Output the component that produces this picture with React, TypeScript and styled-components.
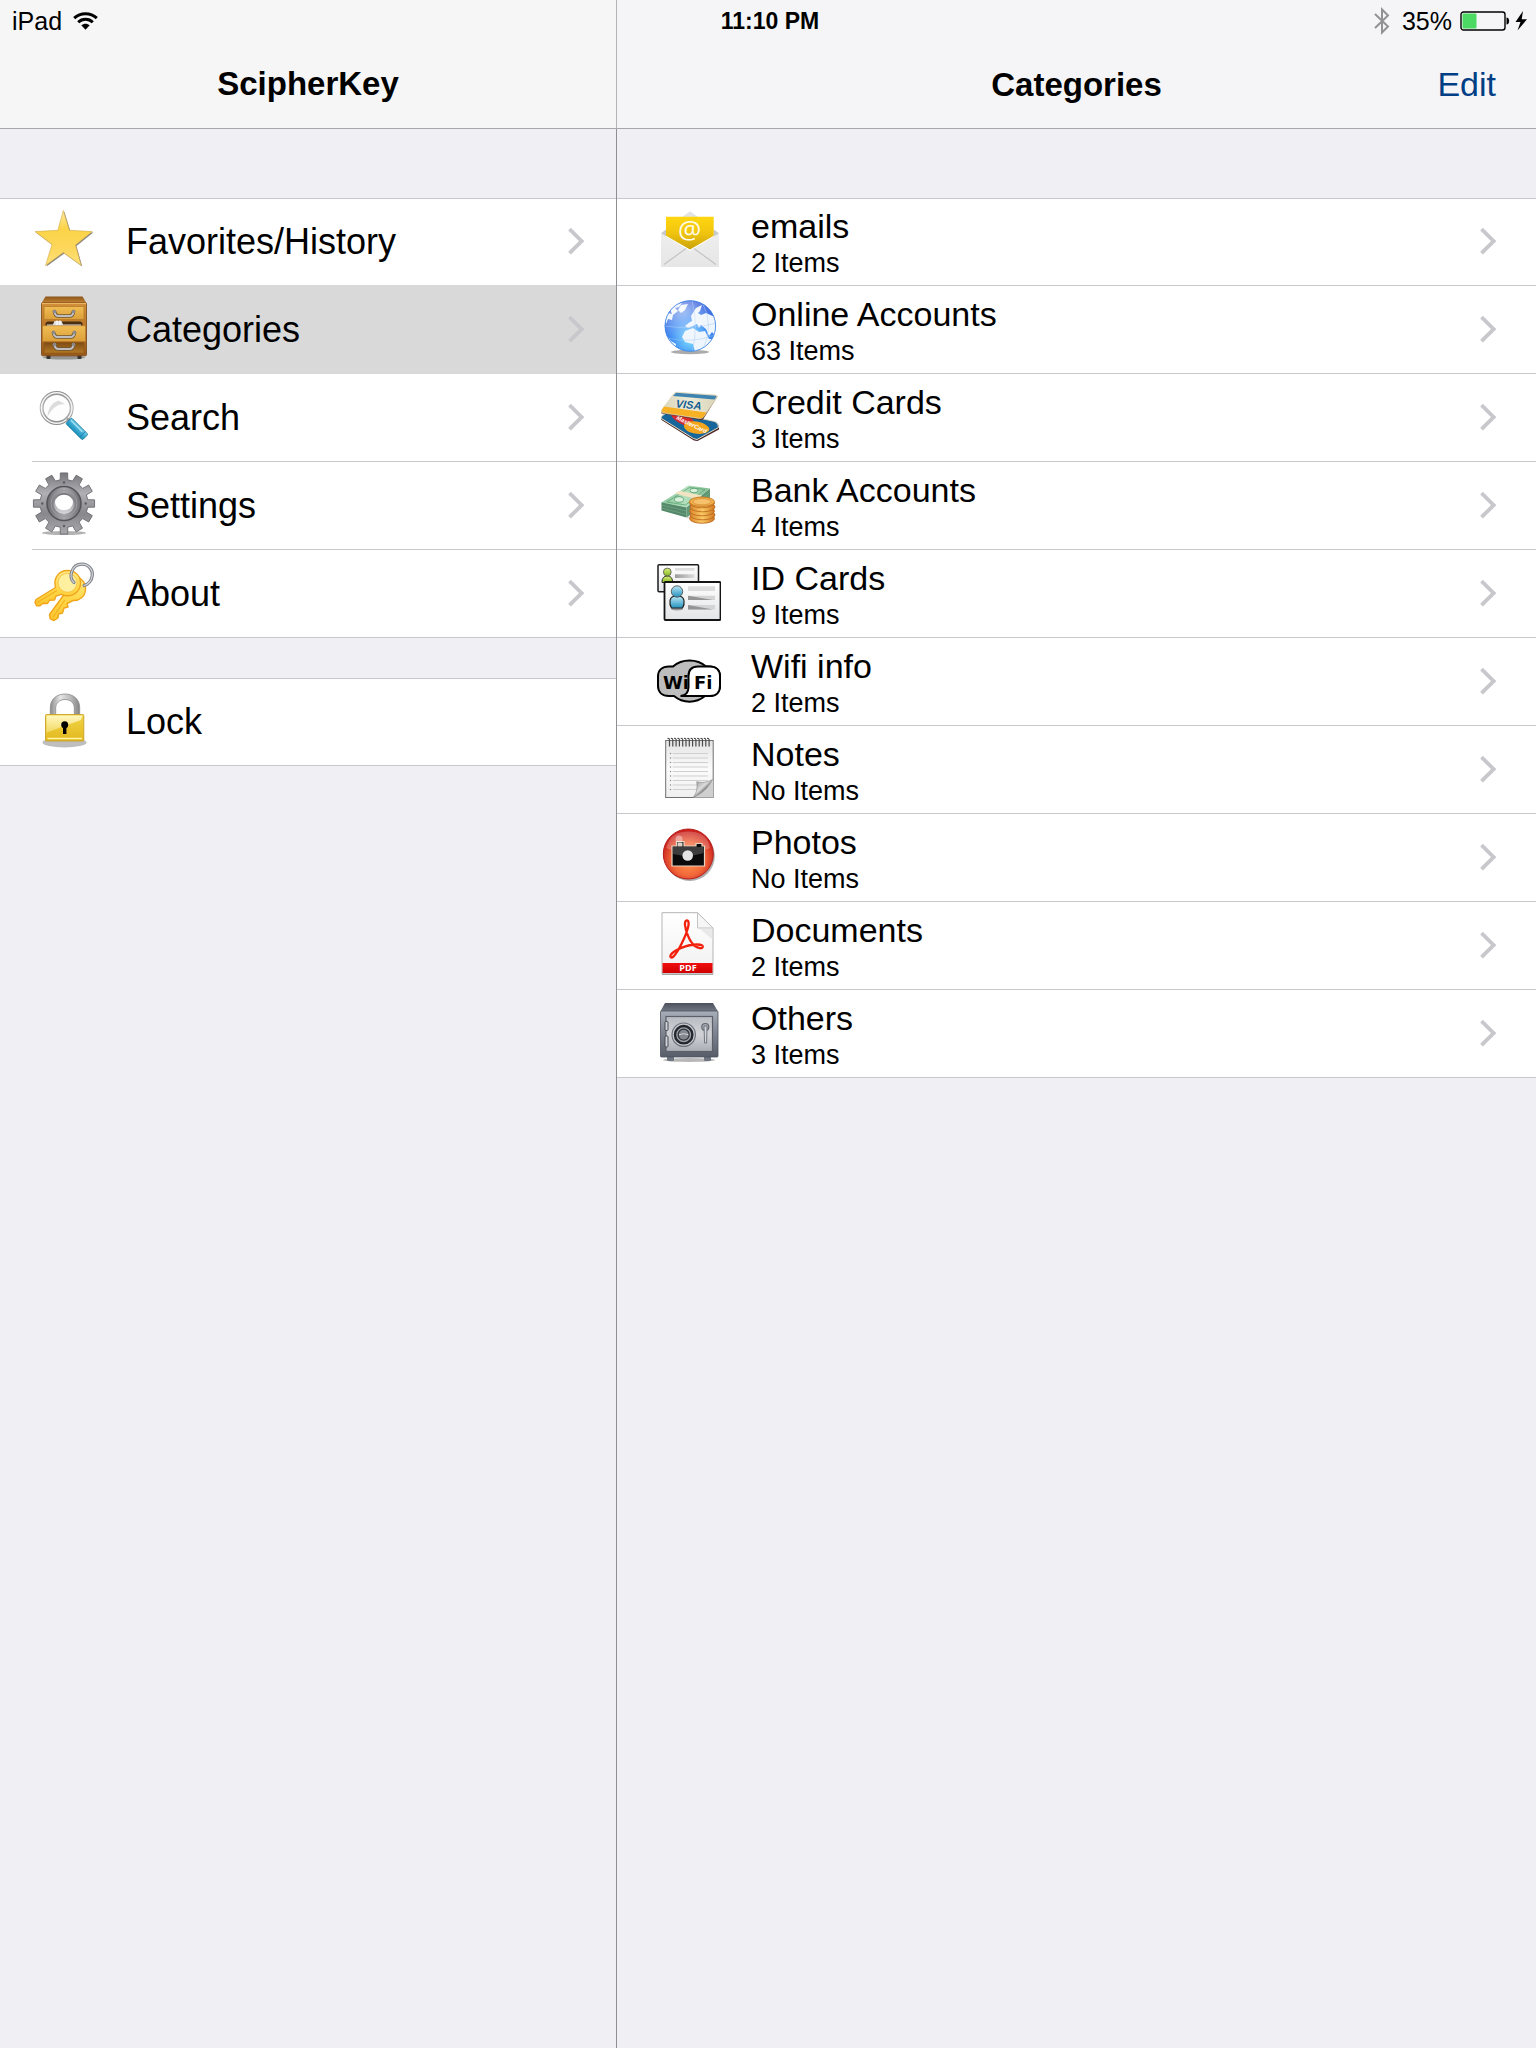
import React from 'react';
import styled, { createGlobalStyle, css } from 'styled-components';

const GlobalStyle = createGlobalStyle`
  *, *::before, *::after { box-sizing: border-box; }
  body {
    margin: 0;
    background: #efeff4;
    color: #000;
    font-family: "Liberation Sans", Arial, sans-serif;
  }
`;

const Screen = styled.div`
  display: grid;
  grid-template-columns: minmax(280px, 617px) minmax(0, 1fr);
  grid-template-rows: 40px 1fr;
  min-height: 100vh;
`;

/* ---------- status bar ---------- */

const StatusBar = styled.header`
  grid-area: 1 / 1 / 2 / 3;
  z-index: 1;
  display: grid;
  grid-template-columns: 1fr auto 1fr;
  align-items: center;
  padding: 2px 8px 0 12px;
  font-size: 25px;
  line-height: 32px;
`;

const StatusGroup = styled.div<{ $end?: boolean }>`
  display: flex;
  align-items: center;
  justify-content: ${(p) => (p.$end ? 'flex-end' : 'flex-start')};
  gap: ${(p) => (p.$end ? '8px' : '11px')};
  svg { display: block; }
`;

const Clock = styled.time`
  font-size: 23px;
  font-weight: 700;
`;

/* ---------- panes ---------- */

const Pane = styled.div<{ $column: number }>`
  grid-row: 1 / 3;
  grid-column: ${(p) => p.$column};
  display: grid;
  grid-template-rows: 129px 1fr;
  min-width: 0;
`;

const NavBar = styled.div<{ $tone: string; $divided?: boolean }>`
  display: grid;
  grid-template-columns: 1fr auto 1fr;
  align-items: baseline;
  padding: 64px 40px 0;
  background: ${(p) => p.$tone};
  border-bottom: 1px solid #a7a7ab;
  ${(p) => p.$divided && css`border-right: 1px solid #b4b4b8;`}
`;

const NavTitle = styled.h1`
  grid-column: 2;
  margin: 0;
  font-size: 33px;
  font-weight: 700;
  line-height: 40px;
`;

const NavAction = styled.button`
  grid-column: 3;
  justify-self: end;
  padding: 0;
  border: 0;
  background: none;
  color: #003f85;
  font: inherit;
  font-size: 34px;
  line-height: 40px;
  cursor: pointer;
`;

const PaneBody = styled.div<{ $divided?: boolean }>`
  display: flex;
  flex-direction: column;
  gap: 40px;
  padding-top: 69px;
  ${(p) => p.$divided && css`border-right: 1px solid #8e8e93;`}
`;

/* ---------- rows ---------- */

const List = styled.ul`
  margin: 0;
  padding: 0;
  list-style: none;
  background: #fff;
`;

type Separator = 'full' | 'inset' | 'selected';

const separators = {
  full: css`border-bottom: 1px solid #c8c7cc;`,
  selected: css`border-bottom: 1px solid #d9d9d9;`,
  inset: css`background: linear-gradient(#c8c7cc, #c8c7cc) 32px 100% / 100% 1px no-repeat;`,
};

const Item = styled.li<{ $separator: Separator }>`
  display: flex;
  height: 88px;
  ${(p) => separators[p.$separator]}
  &:first-child { border-top: 1px solid #c8c7cc; }
`;

const RowLink = styled.a<{ $wide?: boolean; $selected?: boolean }>`
  display: flex;
  flex: 1;
  align-items: center;
  gap: 30px;
  min-width: 0;
  padding: 0 ${(p) => (p.$wide ? '40px' : '32px')};
  background: ${(p) => (p.$selected ? '#d9d9d9' : 'transparent')};
  color: inherit;
  text-decoration: none;
`;

const IconSlot = styled.span`
  flex: none;
  width: 64px;
  height: 64px;
  margin-bottom: 4px;
  svg { display: block; }
`;

const RowText = styled.span<{ $detailed?: boolean }>`
  display: flex;
  flex: 1;
  flex-direction: column;
  min-width: 0;
  padding-top: ${(p) => (p.$detailed ? '4px' : '0')};
`;

const Label = styled.span<{ $large?: boolean }>`
  overflow: hidden;
  font-size: ${(p) => (p.$large ? '36px' : '34px')};
  line-height: ${(p) => (p.$large ? '44px' : '38px')};
  text-overflow: ellipsis;
  white-space: nowrap;
`;

const Detail = styled.span`
  font-size: 27px;
  line-height: 36px;
`;

const Chevron = () => (
  <svg width="16" height="28" viewBox="0 0 16 28" aria-hidden="true">
    <path d="M1.5 1.2 13.7 13.2 1.5 25.2" fill="none" stroke="#c7c7cc" strokeWidth="3.8" />
  </svg>
);

/* ---------- status glyphs ---------- */

const WifiGlyph = () => (
  <svg width="25" height="18" viewBox="0 0 25 18" aria-label="Wi-Fi">
    <g fill="none" stroke="#000" strokeWidth="3">
      <path d="M1.2 6.2C7.5.2 17.5.2 23.8 6.2" />
      <path d="M5.2 10.3C9.3 6.3 15.7 6.3 19.8 10.3" />
    </g>
    <path d="M8.3 13.3C10.7 11.1 14.3 11.1 16.7 13.3L12.5 17.8Z" />
  </svg>
);

const BluetoothGlyph = () => (
  <svg width="20" height="28" viewBox="0 0 20 28" aria-label="Bluetooth">
    <path d="M1 7 14 19.5 8 25.500V2.500L14 8.500 1 21" fill="none" stroke="#929295" strokeWidth="2" />
  </svg>
);

const BatteryGlyph = () => (
  <svg width="68" height="20" viewBox="0 0 68 20" aria-label="Battery charging">
    <rect x="1" y="1" width="44" height="18" rx="2.5" fill="none" stroke="#000" strokeWidth="1.4" />
    <rect x="2.5" y="2.5" width="14" height="15" rx="1" fill="#4cd964" />
    <path d="M46.5 6.500c3.500 0 3.500 7 0 7Z" />
    <path d="M63 0 55.500 11h5L57.500 19.500 67 8.200h-5.300Z" />
  </svg>
);

/* ---------- row icons ---------- */

const Art = ({ children }: { children: React.ReactNode }) => (
  <svg width="64" height="64" viewBox="0 0 64 64" aria-hidden="true">{children}</svg>
);

const Grad = ({ id, stops, flat }: { id: string; stops: string[]; flat?: boolean }) => (
  <linearGradient id={id} x1="0" y1="0" x2={flat ? 1 : 0} y2={flat ? 0 : 1}>
    {stops.map((color, i) => (
      <stop key={i} offset={i / (stops.length - 1)} stopColor={color} />
    ))}
  </linearGradient>
);

const StarIcon = () => {
  const star = 'M31.3 2.5 37.4 22.3 60.3 23.6 43.5 37 49.2 57.5 31.3 44.5 13.5 57.5 20 36.5 3 23.6 25.8 22.3Z';
  return (
    <Art>
      <defs><Grad id="star" stops={['#ffe9a0', '#fbd448', '#fdd65a', '#ffe27a']} /></defs>
      <path d={star} transform="translate(1 1)" fill="#444" opacity=".65" />
      <path d={star} fill="url(#star)" stroke="#d3a94a" strokeWidth=".6" />
    </Art>
  );
};

const DrawerHandle = ({ y, w = 22 }: { y: number; w?: number }) => {
  const l = 32 - w / 2;
  const r = 32 + w / 2;
  const grip = `M${l + 1.5} ${y}q.5 4.500 4 4.500h${w - 11}q3.500 0 4-4.500`;
  return (
    <g fill="none" strokeLinecap="round">
      <path d={grip} stroke="#6b5633" strokeWidth="3.6" />
      <path d={grip} stroke="#bfbfc2" strokeWidth="2.2" />
      <circle cx={l + 1.5} cy={y} r="1.8" fill="#8b8b8d" />
      <circle cx={r - 1.5} cy={y} r="1.8" fill="#8b8b8d" />
    </g>
  );
};

const CabinetIcon = () => (
  <Art>
    <defs>
      <Grad id="cabTop" stops={['#8a531a', '#c38434']} />
      <Grad id="cabBody" stops={['#d2903a', '#b87425', '#98581a']} />
      <Grad id="cabDrawer" stops={['#f0bd55', '#dc9f38']} />
      <Grad id="cabLow" stops={['#7d4b12', '#b57a28']} />
    </defs>
    <ellipse cx="32" cy="61.5" rx="21" ry="2" fill="#777" opacity=".7" />
    <rect x="14.5" y="59" width="4" height="4" rx="1" fill="#333" />
    <rect x="45.5" y="59" width="4" height="4" rx="1" fill="#333" />
    <path d="M13.5.5h37l4 6.500h-45Z" fill="url(#cabTop)" />
    <rect x="9.5" y="6.8" width="45" height="53" rx="1.2" fill="url(#cabBody)" stroke="#7b4510" strokeWidth=".8" />
    <path d="M10 7.500h44" stroke="#e9b565" />
    <rect x="12" y="10.5" width="40" height="13" fill="url(#cabDrawer)" stroke="#b87b2c" strokeWidth=".8" />
    <path d="M13.5 30.500v-3.500l2-1.500h33l2 1.500v3.500Z" fill="#4a2f12" />
    <path d="M15 30v-1.500h6l1.500-3.500h7l1.500 3.500h18V30Z" fill="#dfe1e4" />
    <path d="M25 24.500v5M28 24.500v5" stroke="#fff" strokeWidth="1.2" />
    <rect x="10.5" y="29.8" width="43" height="15.6" fill="url(#cabDrawer)" stroke="#b87b2c" strokeWidth=".7" />
    <rect x="12" y="46.5" width="40" height="10.5" fill="url(#cabLow)" stroke="#8c5618" strokeWidth=".7" />
    <DrawerHandle y={15.5} />
    <DrawerHandle y={36.5} w={24} />
    <DrawerHandle y={48.5} />
  </Art>
);

const SearchIcon = () => (
  <Art>
    <defs>
      <Grad id="rim" stops={['#8f8f8f', '#b9b9b9', '#8a8a8a']} />
      <Grad id="grip" stops={['#72cbe8', '#3aa9d2', '#1d8fbb']} />
    </defs>
    <circle cx="24.7" cy="24" r="15" fill="#fdfdfd" stroke="url(#rim)" strokeWidth="4" />
    <circle cx="24.7" cy="24" r="15.2" fill="none" stroke="#f3f3f3" strokeWidth="1.5" />
    <path d="M15.500 33C16 24 20 18.500 26.500 16.500l6.500 3.500c-8 0-13 4-17.500 13Z" fill="#dcdcdc" />
    <path d="M35 34.500l3 2.500" stroke="#999" strokeWidth="2.4" />
    <g transform="rotate(45 38 38)">
      <rect x="36" y="34" width="23.500" height="8" rx="1.4" fill="url(#grip)" stroke="#1a7ea5" strokeWidth=".9" />
      <path d="M37.500 36.200h16" stroke="#a8e1f2" strokeWidth="1.4" />
      <path d="M55.500 34v8" stroke="#1a7ea5" strokeWidth=".8" />
    </g>
  </Art>
);

const gearOutline = (() => {
  const points: string[] = [];
  for (let i = 0; i < 12; i += 1) {
    [[-9, 24], [-6.8, 30.8], [6.8, 30.8], [9, 24]].forEach(([offset, radius]) => {
      const angle = ((i * 30 + offset - 90) * Math.PI) / 180;
      points.push(`${32 + radius * Math.cos(angle)} ${31.5 + radius * Math.sin(angle)}`);
    });
  }
  return `M${points.join('L')}Z`;
})();

const GearIcon = () => (
  <Art>
    <defs>
      <Grad id="gear" stops={['#77777b', '#b0b0b4', '#88888c', '#a9a9ad']} />
      <Grad id="gearRing" flat stops={['#6d6d72', '#a8a8ac', '#717176']} />
      <Grad id="gearHole" stops={['#6f6f74', '#d9d9dc']} />
    </defs>
    <ellipse cx="32" cy="61" rx="22" ry="2" fill="#666" opacity=".5" />
    <path d={gearOutline} fill="url(#gear)" stroke="#6a6a70" strokeWidth=".9" strokeLinejoin="round" />
    <circle cx="32" cy="31.5" r="17" fill="url(#gearRing)" stroke="#55555b" strokeWidth="1.6" />
    <circle cx="32" cy="31.5" r="13" fill="none" stroke="#9c9ca1" strokeWidth="1" />
    <circle cx="32" cy="31.5" r="10.5" fill="url(#gearHole)" />
    <ellipse cx="32" cy="30.5" rx="9" ry="7.8" fill="#fff" />
    <g fill="#5c5c62">
      <circle cx="32" cy="10.5" r="1.2" /><circle cx="32" cy="54" r="1.2" />
      <circle cx="10.3" cy="31.5" r="1.2" /><circle cx="53.7" cy="31.5" r="1.2" />
    </g>
  </Art>
);

const KeysIcon = () => {
  const ring = 'M42 22.500C36 18 39.500 4 50 4.200c7 .2 11 5.800 10.300 11.300-.5 5-4 9-8.300 10';
  return (
    <Art>
      <defs>
        <Grad id="key" stops={['#ffe98a', '#ffd84a', '#fbc52c']} />
      </defs>
      <g fill="url(#key)" stroke="#f1a51c" strokeWidth="1.4" strokeLinejoin="round">
        <path d="M40 16c8 0 14 6 13.500 13.500C53 37 47 41 41 40.500l-6 3 1 3.500-4 1-1.500 5-4 1-.5 4-4 2.500-4-2-.5-4L31 36Z" />
        <path d="M35.500 10.500c8 0 13 5.500 13 12.500s-5.500 12.800-13 12.800c-2.500 0-4.500-.6-6-1.500L24 36l-1.500 4-5 .3-2 3.200-4.500-.2-3 2.500H4.500L3 42.500l1-3L23.500 27.500C21 18 27 10.500 35.500 10.500Z" />
      </g>
      <path d="M5 42.500 25 30.500M21 57 33 40" stroke="#f3b024" strokeWidth="1.2" />
      <circle cx="35.5" cy="22.8" r="9.500" fill="#fff0a0" stroke="#f6bb33" strokeWidth=".8" />
      <path d={ring} fill="none" stroke="#7d8088" strokeWidth="3.200" strokeLinecap="round" />
      <path d={ring} fill="none" stroke="#d5d7db" strokeWidth="1.200" strokeLinecap="round" />
    </Art>
  );
};

const LockIcon = () => (
  <Art>
    <defs>
      <Grad id="shackle" flat stops={['#8a8a8a', '#e6e6e6', '#bdbdbd', '#858585']} />
      <Grad id="lockBody" stops={['#f0d548', '#e3b81d']} />
      <Grad id="lockShine" stops={['#fff6c0', '#f2d95e']} />
    </defs>
    <ellipse cx="32.5" cy="54.5" rx="22" ry="5" fill="#888" opacity=".55" />
    <path d="M18.3 28V19.500C18.300 11 25 6 33 6s14.700 5 14.700 13.500V28h-5.400v-8c0-5-3.800-8.500-9.300-8.500s-9.300 3.500-9.300 8.500v8Z" fill="url(#shackle)" stroke="#8a8a8a" strokeWidth=".8" />
    <rect x="13.5" y="26.5" width="38.3" height="26.5" rx="1" fill="url(#lockBody)" stroke="#c9a227" strokeWidth=".9" />
    <path d="M14.500 27.500h36L49 32 16 44l-1.500 1Z" fill="url(#lockShine)" />
    <path d="M15.500 50.500h34.500" stroke="#fff3a5" strokeWidth="1.3" />
    <circle cx="32.7" cy="36.7" r="3.500" />
    <path d="M31 37h3.400v9H31Z" />
  </Art>
);

const EmailIcon = () => (
  <Art>
    <defs>
      <Grad id="mailFlap" stops={['#ffd710', '#f0c40e', '#c9a20c']} />
      <Grad id="mailBody" stops={['#eeeeee', '#e6e6e6']} />
    </defs>
    <path d="M33 3.300 41 9H25Z" fill="#e2e3e4" />
    <path d="M4 25.300 9 21.500V32ZM62 25.300 56.700 21.500V32Z" fill="#c6c9cb" />
    <path d="M4 25.300 33 43 62 25.300V59H4Z" fill="url(#mailBody)" />
    <path d="M7 56.500 29 40.500M59 56.500 37 40.500" stroke="#c4c4c4" strokeWidth="1.200" />
    <path d="M9 8.700h47.700v19L33 41.500 9 27.700Z" fill="url(#mailFlap)" />
    <text x="32.700" y="31" textAnchor="middle" fontFamily="Open Sans, sans-serif" fontSize="26" fill="#fffbe8">@</text>
  </Art>
);

const GlobeIcon = () => (
  <Art>
    <defs>
      <radialGradient id="globe" cx=".5" cy=".75" r=".75">
        <stop offset="0" stopColor="#7fe0ff" />
        <stop offset=".5" stopColor="#3f8df5" />
        <stop offset="1" stopColor="#3558d8" />
      </radialGradient>
      <radialGradient id="globeShine" cx=".35" cy=".2" r=".6">
        <stop offset="0" stopColor="#fff" stopOpacity=".55" />
        <stop offset="1" stopColor="#fff" stopOpacity="0" />
      </radialGradient>
      <clipPath id="globeClip"><circle cx="33.3" cy="30" r="25.5" /></clipPath>
    </defs>
    <ellipse cx="33" cy="56" rx="19" ry="2.2" fill="#888" opacity=".7" />
    <circle cx="33.3" cy="30" r="25.5" fill="url(#globe)" />
    <g clipPath="url(#globeClip)">
      <g fill="#eef5fd">
        <path d="M8 24 11 17 15 18 13 13 19 8 25 7 22 11 18 12 21 15 16 19 15 24 11 23 9 28Z" />
        <path d="M24 9 31 8 28 14 24 17 21 14Z" />
        <path d="M34 20 39 12 45 9 43 15 41 17 44 19 49 17 60 22V42L55 36 52 40 49 33 44 29 42 32 40 28 36 30 31 32 28 30 33 26 35 25Z" />
        <path d="M28 35 36 32 42 36 48 35 52 43 57 43 54 51 45 57 38 56 36 48 28 46 25 41Z" />
        <path d="M8 38 14 45 19 48 18 54 10 46Z" />
      </g>
      <g fill="none" stroke="#a8cdf6" strokeWidth=".6" opacity=".8">
        <path d="M10 42Q34 48 58 39M7 30Q34 34 60 27M35 5Q42 30 35 56M46 8Q57 30 46 53" />
      </g>
    </g>
    <circle cx="33.3" cy="30" r="25.3" fill="url(#globeShine)" stroke="#3f86e6" strokeWidth=".8" />
  </Art>
);

const CardsIcon = () => (
  <Art>
    <defs><Grad id="visa" flat stops={['#d9d5ba', '#efecd6', '#d8d3b8']} /></defs>
    <path d="M4 33.500Q8 29 14 28.500L58 38Q62 40 62 43.500V45.500L40.500 57 37 56.500 4.500 36Z" fill="#4a2626" />
    <path d="M4 33Q8 28 14 28L58 37.500Q62 40 61.500 43.500L40 55.500 36.500 54.500 4.500 34.500Z" fill="#17679d" stroke="#e9dfc4" strokeWidth="1" />
    <path d="M14 31C18 28 27 30 35 35L40 42C30 44 17 38 14 31Z" fill="#d52b2d" />
    <path d="M27 41C30 36 42 36 49 41S51 49 43 50C34 50 26 46 27 41Z" fill="#f3a51d" />
    <text transform="translate(19 35) rotate(26)" fontFamily="Liberation Sans, sans-serif" fontStyle="italic" fontWeight="700" fontSize="6" fill="#fff">MasterCard</text>
    <path d="M60.700 12 46 35.500 44 36 4.500 29.500V27Z" fill="#592a1e" />
    <path d="M20 8.200 58.500 11Q61 11.500 60 13.500L46.500 33Q45 35 42 34.500L6 29Q3.500 28 5 25.500L16.500 10Q18 8 20 8.200Z" fill="url(#visa)" stroke="#d8cfae" strokeWidth=".6" />
    <path d="M19 8.800 58.500 11.800Q60 12 59 13.500L57.500 15.500 16 12Z" fill="#3f83b0" />
    <path d="M7 22.500 49.500 28.500 46.500 33Q45 34.500 42 34L6 28.500Q4 27.500 5 25.500Z" fill="#f6b224" />
    <text transform="translate(18.500 23.200) rotate(6)" fontFamily="Liberation Sans, sans-serif" fontStyle="italic" fontWeight="700" fontSize="11" fill="#135e94">VISA</text>
  </Art>
);

const MoneyIcon = () => (
  <Art>
    <defs>
      <Grad id="bill" flat stops={['#8cc59c', '#b4dfbd', '#83bd92']} />
      <Grad id="coin" flat stops={['#d8852a', '#fbc965', '#cf771d']} />
    </defs>
    <path d="M4.500 38.500 29.500 46 52.500 27V33L31 46.500Z" fill="#777" opacity=".3" />
    <path d="M4.500 30V38.500L29.500 45.500V35Z" fill="#54896a" />
    <path d="M29.500 35V45.500L53 28V16.500Z" fill="#5d9673" />
    <path d="M4.500 33 29.500 39 53 20.500M4.500 36 29.500 42.500 53 24" fill="none" stroke="#7dab8c" strokeWidth=".6" />
    <path d="M4.500 30.500 31.500 13.500 53 16.500 29.500 35.500Z" fill="url(#bill)" />
    <path d="M10 30 32.500 15.500 48 17.500 28.500 33Z" fill="none" stroke="#5aa673" strokeWidth=".8" />
    <ellipse cx="22" cy="27.500" rx="4.500" ry="2.800" fill="#d9f0dd" stroke="#4e9b68" strokeWidth=".8" />
    <ellipse cx="37" cy="18.500" rx="4" ry="2.300" fill="#d9f0dd" stroke="#4e9b68" strokeWidth=".8" />
    <path d="M18 21.500 22.500 18.800 45 23.500 41 27.500Z" fill="#f2e3c2" />
    {[46.500, 43, 39, 35, 31].map((y, i) => (
      <ellipse key={y} cx={i % 2 ? 45.500 : 45} cy={y} rx="12.500" ry="4.800" fill="url(#coin)" stroke="#b9651a" strokeWidth=".8" />
    ))}
    <ellipse cx="45" cy="29.700" rx="12.500" ry="4.700" fill="#f2b04c" stroke="#c57a22" strokeWidth=".9" />
    <ellipse cx="45" cy="29.700" rx="9" ry="3.100" fill="#f7c26c" stroke="#d48c35" strokeWidth=".7" />
  </Art>
);

const IdCardsIcon = () => (
  <Art>
    <defs>
      <Grad id="idCard" stops={['#ffffff', '#e3e4e6']} />
      <Grad id="idGreen" stops={['#d8ef7a', '#86b822']} />
      <Grad id="idBlue" stops={['#b9e6f5', '#2492be']} />
      <Grad id="idLine" flat stops={['#9a9a9a', '#dddddd']} />
    </defs>
    <rect x="1" y="4.7" width="40.500" height="27" rx="1" fill="url(#idCard)" stroke="#1c1c1c" strokeWidth="1.500" />
    <path d="M5 22.500C5 18 7 16 10.300 16s5.300 2 5.300 6.500Z" fill="url(#idGreen)" stroke="#222" />
    <circle cx="10.3" cy="12" r="3.900" fill="url(#idGreen)" stroke="#555" strokeWidth=".8" />
    <path d="M18 8h19.500v2.700H18Z" fill="#ddd" />
    <path d="M18 14.300h19.500V18H18Z" fill="url(#idLine)" />
    <rect x="7.500" y="22" width="56" height="38" rx="1" fill="url(#idCard)" stroke="#141414" strokeWidth="1.800" />
    <ellipse cx="20" cy="49" rx="6" ry="1.500" fill="#999" />
    <path d="M14.500 48C11.500 43 13 37.500 16 36.500h8C27 37.500 28.500 43 25.500 48Z" fill="url(#idBlue)" stroke="#222" strokeWidth="1.200" />
    <circle cx="20" cy="31.500" r="5.700" fill="url(#idBlue)" stroke="#555" strokeWidth=".9" />
    <path d="M31 26.300h27V31H31Z" fill="#dcdcdc" />
    <path d="M31 35.700h27v4.400H31ZM31 45h27v4.400H31Z" fill="#d5d5d5" />
    <path d="M31 35.700 56 40.100H31ZM31 45 56 49.400H31Z" fill="#949494" />
  </Art>
);

const WifiLogoIcon = () => (
  <Art>
    <path
      d="M12 18.500h4C25 10.500 40 10.500 49 18.500h3c7 0 11 4 11 10V38c0 6-4 10-11 10h-4C39 55.500 26 55.500 17 48h-5C5 48 1 44 1 38V28.500c0-6 4-10 11-10Z"
      fill="#bdbdbd" stroke="#000" strokeWidth="2"
    />
    <path d="M41 18.500h12c6.500 0 10 4 10 10V38c0 6-3.500 10-10 10H23.500c5-.5 8-4 8-9V28c0-6 3.500-9.500 9.500-9.500Z" fill="#fff" stroke="#000" strokeWidth="2" />
    <g fontFamily="DejaVu Sans, sans-serif" fontWeight="700" fontSize="18">
      <text x="6" y="41">Wi</text>
      <text x="37" y="41">Fi</text>
    </g>
  </Art>
);

const NotesIcon = () => (
  <Art>
    <defs>
      <Grad id="paper" stops={['#e4e4e4', '#fbfbfb', '#efefef']} />
      <linearGradient id="curl" x1="0" y1="0" x2="1" y2="1">
        <stop offset=".05" stopColor="#8d8d8d" />
        <stop offset=".45" stopColor="#dedede" />
        <stop offset=".6" stopColor="#777" />
      </linearGradient>
    </defs>
    <rect x="8.7" y="4.500" width="47.500" height="57" fill="url(#paper)" stroke="#6f6f6f" strokeWidth="1" />
    {Array.from({ length: 13 }, (_, i) => (
      <path key={i} d={`M${12.5 + i * 3.3} 10.500V4q0-2-2-1.500`} fill="none" stroke="#4a4a4a" strokeWidth="1.200" />
    ))}
    {Array.from({ length: 9 }, (_, i) => (
      <g key={i}>
        <path d={`M15.700 ${17.5 + i * 4.5}H51`} stroke="#cfcfcf" strokeWidth="1" />
        <circle cx="13.500" cy={17.5 + i * 4.5} r=".7" fill="#888" />
      </g>
    ))}
    <path d="M36 61.500 56.200 43.500V61.500Z" fill="#cfcfcf" />
    <path d="M36 61.500C40 57 40.500 52 39.700 45.700 45 47 50 46.500 55.500 43.500 51 52 45 57.500 36 61.500Z" fill="url(#curl)" stroke="#777" strokeWidth=".5" />
  </Art>
);

const PhotosIcon = () => (
  <Art>
    <defs>
      <radialGradient id="photo" cx=".5" cy=".6" r=".55">
        <stop offset="0" stopColor="#ffa050" />
        <stop offset=".6" stopColor="#f2683a" />
        <stop offset="1" stopColor="#c9201d" />
      </radialGradient>
    </defs>
    <circle cx="32.8" cy="32" r="25" fill="#777" opacity=".6" />
    <circle cx="31.3" cy="30" r="25" fill="url(#photo)" stroke="#b91d1a" strokeWidth="1" />
    <path d="M9.500 24C12 11 21 7.500 31.300 7.500S51 11 53 24C42 29 20 29 9.500 24Z" fill="#fff" opacity=".22" />
    <path d="M15 22h4.500v-4.500H27V22h12v-2.500h6V22h2.500v20H15Z" fill="#0b0b0b" stroke="#e8d4c5" strokeWidth="1.200" />
    <path d="M16 23h30.500v6q-15 5-30.500 1Z" fill="#3c3c3c" />
    <rect x="20.500" y="18.500" width="5" height="4" fill="#d9cfc7" />
    <circle cx="30.700" cy="31.500" r="5.300" fill="#e3e3e3" />
    <circle cx="22" cy="15" r="3.500" fill="#fff" opacity=".4" />
  </Art>
);

const PdfIcon = () => (
  <Art>
    <defs>
      <Grad id="pdfPage" stops={['#ffffff', '#f1f1f1']} />
      <Grad id="pdfBand" stops={['#f01010', '#d00000']} />
    </defs>
    <path d="M5 .7h35.500L56 16v46H5Z" fill="url(#pdfPage)" stroke="#b5b5b5" strokeWidth="1" />
    <path d="M40.500.7 56 16H40.500Z" fill="#f6f6f6" stroke="#bdbdbd" strokeWidth=".9" />
    <path d="M44 18 56 28V16.500H42Z" fill="#ddd" opacity=".6" />
    <rect x="5.500" y="51" width="50" height="10" fill="url(#pdfBand)" />
    <path
      d="M29.500 8.500c2.500-.5 2.500 3 1.500 7C29 24 21 40 16.500 44.500c-2.500 2-4 .5-2.500-2C17 38 30 32.500 40 32.500c5 0 6 1 5.800 2.500-.5 2-4.500 1.500-8-1C32 29.500 28.500 18 28 13c-.2-2.500.3-4.200 1.500-4.500Z"
      fill="none" stroke="#f3200c" strokeWidth="2.300"
    />
    <path d="M5 62.300h51" stroke="#888" strokeWidth=".8" />
    <text x="31" y="59.300" textAnchor="middle" fontFamily="Open Sans, sans-serif" fontWeight="700" fontSize="9" fill="#fff">PDF</text>
  </Art>
);

const SafeIcon = () => (
  <Art>
    <defs>
      <Grad id="safeTop" stops={['#4c515c', '#737985']} />
      <Grad id="safeBody" stops={['#a9afb9', '#7c828e', '#575d69']} />
      <Grad id="safeDoor" stops={['#b9bcc2', '#d0d2d6', '#aaaeb5']} />
    </defs>
    <ellipse cx="32" cy="60" rx="26" ry="2" fill="#888" opacity=".6" />
    <rect x="10" y="56" width="7" height="5" rx="1" fill="#6e7480" />
    <rect x="47" y="56" width="7" height="5" rx="1" fill="#6e7480" />
    <path d="M8 3h48l5 8.500H3.300Z" fill="url(#safeTop)" />
    <rect x="3.500" y="11" width="57.500" height="46" rx="1" fill="url(#safeBody)" stroke="#4d535e" strokeWidth=".8" />
    <rect x="9" y="16.500" width="46.500" height="35" fill="url(#safeDoor)" stroke="#5a5f69" strokeWidth="1.200" />
    <rect x="8" y="21.500" width="3" height="9" rx="1" fill="#cfd1d6" stroke="#3d414a" strokeWidth=".9" />
    <rect x="8" y="36" width="3" height="11" rx="1" fill="#cfd1d6" stroke="#3d414a" strokeWidth=".9" />
    <circle cx="26.700" cy="34.700" r="11.700" fill="#c7c9cd" stroke="#6c717b" strokeWidth="1.200" />
    <circle cx="26.700" cy="34.700" r="8.700" fill="#9da1a8" stroke="#23262c" strokeWidth="2.400" />
    <circle cx="26.700" cy="34.700" r="5.500" fill="#84888f" stroke="#31343a" strokeWidth="1.300" />
    <path d="M22 34.700q4.700-2 9.400 0" stroke="#d5d7da" fill="none" />
    <circle cx="48.300" cy="27" r="3.500" fill="#a9adb4" stroke="#62666f" strokeWidth="1.200" />
    <path d="M47 26h3l-.4 17h-2Z" fill="#d5d7db" stroke="#666b75" strokeWidth=".9" />
  </Art>
);

/* ---------- data ---------- */

type MenuEntry = { label: string; Icon: React.FC; separator: Separator; selected?: boolean; plain?: boolean };

const menuGroups: MenuEntry[][] = [
  [
    { label: 'Favorites/History', Icon: StarIcon, separator: 'selected' },
    { label: 'Categories', Icon: CabinetIcon, separator: 'selected', selected: true },
    { label: 'Search', Icon: SearchIcon, separator: 'inset' },
    { label: 'Settings', Icon: GearIcon, separator: 'inset' },
    { label: 'About', Icon: KeysIcon, separator: 'full' },
  ],
  [{ label: 'Lock', Icon: LockIcon, separator: 'full', plain: true }],
];

const categories: { label: string; detail: string; Icon: React.FC }[] = [
  { label: 'emails', detail: '2 Items', Icon: EmailIcon },
  { label: 'Online Accounts', detail: '63 Items', Icon: GlobeIcon },
  { label: 'Credit Cards', detail: '3 Items', Icon: CardsIcon },
  { label: 'Bank Accounts', detail: '4 Items', Icon: MoneyIcon },
  { label: 'ID Cards', detail: '9 Items', Icon: IdCardsIcon },
  { label: 'Wifi info', detail: '2 Items', Icon: WifiLogoIcon },
  { label: 'Notes', detail: 'No Items', Icon: NotesIcon },
  { label: 'Photos', detail: 'No Items', Icon: PhotosIcon },
  { label: 'Documents', detail: '2 Items', Icon: PdfIcon },
  { label: 'Others', detail: '3 Items', Icon: SafeIcon },
];

export default function App() {
  return (
    <>
      <GlobalStyle />
      <Screen>
        <StatusBar>
          <StatusGroup>
            <span>iPad</span>
            <WifiGlyph />
          </StatusGroup>
          <Clock>11:10 PM</Clock>
          <StatusGroup $end>
            <BluetoothGlyph />
            <span>35%</span>
            <BatteryGlyph />
          </StatusGroup>
        </StatusBar>

        <Pane as="nav" $column={1}>
          <NavBar $tone="#f6f6f6" $divided>
            <NavTitle>ScipherKey</NavTitle>
          </NavBar>
          <PaneBody $divided>
            {menuGroups.map((group) => (
              <List key={group[0].label}>
                {group.map(({ label, Icon, separator, selected, plain }) => (
                  <Item key={label} $separator={separator}>
                    <RowLink href="#" $selected={selected} aria-current={selected ? 'page' : undefined}>
                      <IconSlot><Icon /></IconSlot>
                      <RowText><Label $large>{label}</Label></RowText>
                      {!plain && <Chevron />}
                    </RowLink>
                  </Item>
                ))}
              </List>
            ))}
          </PaneBody>
        </Pane>

        <Pane as="main" $column={2}>
          <NavBar $tone="#f5f5f7">
            <NavTitle>Categories</NavTitle>
            <NavAction type="button">Edit</NavAction>
          </NavBar>
          <PaneBody>
            <List>
              {categories.map(({ label, detail, Icon }) => (
                <Item key={label} $separator="full">
                  <RowLink href="#" $wide>
                    <IconSlot><Icon /></IconSlot>
                    <RowText $detailed>
                      <Label>{label}</Label>
                      <Detail>{detail}</Detail>
                    </RowText>
                    <Chevron />
                  </RowLink>
                </Item>
              ))}
            </List>
          </PaneBody>
        </Pane>
      </Screen>
    </>
  );
}
